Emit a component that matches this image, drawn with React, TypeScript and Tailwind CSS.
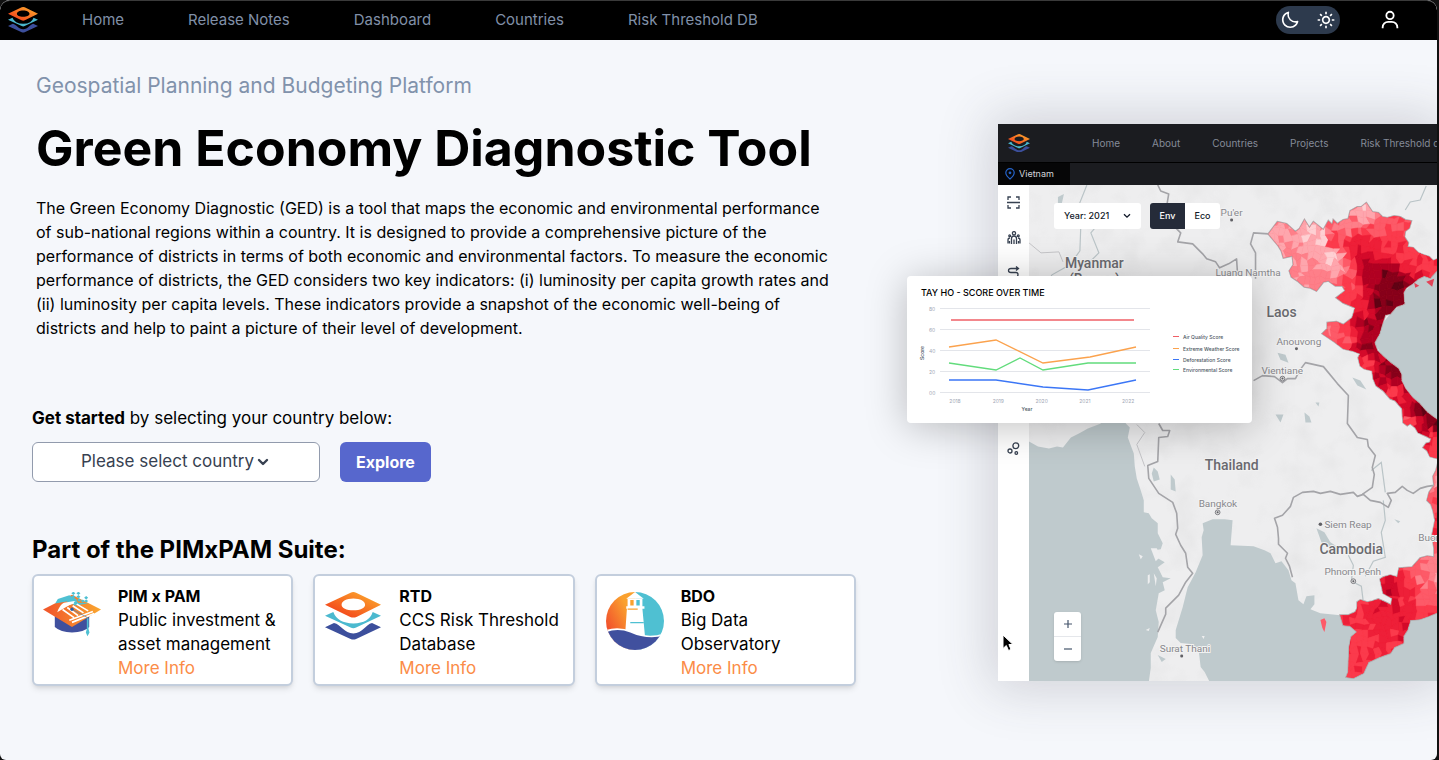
import { useId } from "react";
import { BiMoon, BiSun, BiUser } from "react-icons/bi";

const navLinks = ["Home", "Release Notes", "Dashboard", "Countries", "Risk Threshold DB"];
const previewLinks = ["Home", "About", "Countries", "Projects", "Risk Threshold db"];

function LayersLogo({ className }: { className?: string }) {
  const id = useId();
  return (
    <svg viewBox="0 0 162 138" className={className} aria-hidden="true">
      <defs>
        <linearGradient id={id} x1="0" y1="1" x2="1" y2="0">
          <stop offset="0.25" stopColor="#f4511e" />
          <stop offset="0.85" stopColor="#fba02b" />
        </linearGradient>
      </defs>
      <path d="M0 102 L26 90 C46 94 56 120 82 120 C108 120 118 94 136 90 L162 102 L90 136 Q82 139 74 136 Z" fill="#3c4f9c" />
      <path d="M0 69 L24 58 Q36 90 82 91 Q128 90 138 58 L162 69 L90 103 Q82 107 74 103 Z" fill="#4bb9cf" />
      <path
        fillRule="evenodd"
        fill={`url(#${id})`}
        d="M0 37 L74 2 Q82 -2 90 2 L162 37 L91 72 Q82 76 73 72 Z M82 19 C62 19 48 27 48 37 C48 47 62 53 82 53 C102 53 116 47 116 37 C116 27 102 19 82 19 Z"
      />
    </svg>
  );
}

function CapLogo() {
  return (
    <svg viewBox="0 0 172 132" className="w-[58px]" aria-hidden="true">
      <defs>
        <linearGradient id="cap" x1="0" x2="1">
          <stop offset="0.1" stopColor="#f15a2b" />
          <stop offset="1" stopColor="#faa72f" />
        </linearGradient>
      </defs>
      <path d="M35 70 V104 Q52 120 86 120 Q122 120 137 104 V70 Z" fill="#40509e" />
      <path d="M0 52 L86 8 L172 52 L86 104 Z" fill="url(#cap)" />
      <path d="M36 34 L44 21 L78 10 L96 20 L104 32 L136 33 L96 40 L70 28 Z" fill="#4fc0d2" />
      <path d="M42 60 Q50 38 62 32 L98 26 L90 32 Z" fill="#fff" />
      <g stroke="#fff" strokeWidth="5" fill="none">
        <path d="M60 42 L92 32 M58 52 L92 76 M72 46 L104 70 M88 41 L120 62 M100 36 L134 56 M78 84 L148 58 M86 90 L152 64" />
      </g>
      <g fill="#4fc0d2">
        {[[90, 4], [105, 4], [90, 14], [105, 14], [95, 24], [107, 24], [128, 17], [128, 27], [118, 27]].map(([x, y]) => (
          <path key={`${x}-${y}`} d={`M${x - 6} ${y} L${x} ${y - 5} L${x + 6} ${y} L${x} ${y + 5} Z`} />
        ))}
        <path d="M130 78 H135 V110 L138 120 L132 131 L127 120 L130 110 Z" />
      </g>
      <path d="M86 51 L132 76" stroke="#4a7fb5" strokeWidth="2" />
      <circle cx="86" cy="51" r="5" fill="#2c5fa8" />
    </svg>
  );
}

function LighthouseLogo() {
  return (
    <svg viewBox="0 0 172 172" className="w-[58px]" aria-hidden="true">
      <defs>
        <linearGradient id="beam" x1="0" y1="0.9" x2="0.9" y2="0">
          <stop offset="0.1" stopColor="#f0452c" />
          <stop offset="0.75" stopColor="#faa12e" />
        </linearGradient>
        <clipPath id="disc">
          <circle cx="86" cy="86" r="86" />
        </clipPath>
      </defs>
      <g clipPath="url(#disc)">
        <rect width="88" height="172" fill="url(#beam)" />
        <rect x="88" width="84" height="172" fill="#4fc0d2" />
        <path d="M86 0 L112 20 H60 Z" fill="#fff" />
        <path d="M64 20 H108 V42 H64 Z M60 42 H114 V50 H60 Z M62 50 H108 L116 136 H56 Z" fill="#fff" />
        <path d="M72 24 h10 v16 h-10 Z M64 49 H94 V53 H64 Z" fill="#faa12e" />
        <path d="M90 24 h10 v16 h-10 Z M72 89 H112 V93 H72 Z" fill="#4fc0d2" />
        <path d="M0 113 Q36 100 76 116 Q124 140 172 122 V172 H0 Z" fill="#fff" />
        <path d="M0 119 Q36 106 72 120 Q120 142 172 130 V172 H0 Z" fill="#40509e" />
      </g>
    </svg>
  );
}

const suite = [
  { name: "PIM x PAM", lines: ["Public investment &", "asset management"], logo: <CapLogo /> },
  { name: "RTD", lines: ["CCS Risk Threshold", "Database"], logo: <LayersLogo className="w-[56px]" /> },
  { name: "BDO", lines: ["Big Data", "Observatory"], logo: <LighthouseLogo /> },
];

/* Districts: a jittered mesh shaded by the nearest anchors of intensity. */
const shades = ["#fed0d3", "#fea6ad", "#fe7f89", "#fd5a68", "#fb3a4c", "#ee1f38", "#d40a2a", "#b00022", "#87001a", "#600214"];
const anchors = [
  [1275, 232, 1.3], [1290, 250, 2], [1305, 228, 0.6], [1318, 236, 0], [1327, 252, 0], [1335, 265, 1],
  [1300, 272, 1.6], [1318, 280, 2], [1338, 222, 2.2], [1362, 208, 0.8], [1380, 222, 3.2], [1400, 228, 3.6],
  [1330, 236, 4.5], [1352, 240, 5.6], [1362, 256, 6.3], [1378, 246, 4.6], [1400, 252, 4.3], [1425, 262, 4.4],
  [1345, 275, 3], [1350, 292, 4], [1366, 274, 7], [1385, 272, 8.4], [1393, 284, 8.6], [1376, 296, 8.3],
  [1360, 304, 5], [1385, 310, 8.4], [1366, 322, 7.4], [1330, 328, 2.6], [1342, 332, 3.7], [1368, 345, 7.8],
  [1365, 360, 4.3], [1386, 368, 7.8], [1376, 376, 6.3], [1390, 388, 4.2], [1398, 376, 7.6], [1405, 400, 6.2],
  [1418, 408, 8.6], [1432, 420, 9], [1408, 418, 3.6], [1420, 428, 6.4], [1432, 434, 4.4], [1430, 450, 4.2],
  [1436, 475, 1], [1432, 498, 3], [1436, 525, 5], [1434, 560, 2], [1437, 575, 1], [1418, 575, 3],
  [1424, 595, 2.8], [1432, 608, 4], [1388, 585, 6.4], [1402, 592, 4.6], [1395, 612, 5.7], [1406, 608, 5.5],
  [1375, 615, 5], [1355, 620, 4.7], [1365, 640, 4.2], [1385, 635, 4.7], [1355, 665, 4], [1400, 632, 5],
];

function noise(a: number, b: number) {
  const v = Math.sin(a * 127.1 + b * 311.7) * 43758.5453;
  return v - Math.floor(v);
}

function meshPoint(i: number, j: number, size: number) {
  return [
    1264 + (i + noise(i, j) * 0.8) * size,
    196 + (j + noise(j + 50, i) * 0.8) * size,
  ].map(Math.round);
}

function districts() {
  const size = 6;
  const cells = [];
  for (let i = -1; i < 30; i++) {
    for (let j = -1; j < 82; j++) {
      const [x, y] = meshPoint(i, j, size);
      let sum = 0;
      let weight = 0;
      for (const [ax, ay, value] of anchors) {
        const w = 1 / (((x - ax) ** 2 + (y - ay) ** 2) ** 1.5 + 20);
        sum += value * w;
        weight += w;
      }
      const level = Math.max(0, Math.min(9, Math.round(sum / weight + (noise(i + 9, j + 4) - 0.5) * 1.1)));
      const points = [[i, j], [i + 1, j], [i + 1, j + 1], [i, j + 1]].map(([a, b]) => meshPoint(a, b, size).join(",")).join(" ");
      cells.push(<polygon key={`${i}:${j}`} points={points} fill={shades[level]} stroke={shades[level]} strokeWidth="0.6" />);
    }
  }
  return cells;
}

const north =
  "M1268 233 L1277 221 L1286 223 L1295 231 L1299 228 L1304 219 L1309 227 L1313 221 L1323 229 L1328 220 L1332 224 L1333 219 L1337 223 L1343 219 L1348 218 L1350 210 L1357 206 L1361 206 L1366 202 L1372 211 L1378 212 L1382 216 L1387 217 L1394 215 L1400 216 L1405 219 L1411 220 L1409 227 L1405 230 L1404 236 L1408 242 L1407 246 L1413 247 L1418 252 L1423 254 L1429 256 L1433 260 L1438 258 V268 L1430 277 L1424 275 L1418 278 L1412 283 L1406 287 L1403 292 L1404 303 L1396 306 L1390 313 L1385 314 L1382 323 L1379 333 L1374 342 L1377 350 L1382 355 L1390 362 L1398 368 L1401 374 L1401 380 L1405 388 L1412 397 L1419 403 L1427 412 L1438 420 V458 L1430 456 L1427 450 L1423 447 L1426 443 L1430 442 L1431 438 L1427 436 L1418 432 L1415 427 L1410 423 L1407 425 L1403 422 L1402 408 L1395 400 L1390 398 L1383 390 L1376 385 L1373 378 L1372 370 L1364 368 L1360 365 L1358 357 L1360 353 L1352 350 L1343 348 L1334 341 L1322 333 L1327 328 L1327 322 L1336 321 L1343 324 L1352 317 L1355 307 L1343 302 L1336 297 L1345 290 L1342 285 L1335 285 L1328 280 L1323 281 L1316 290 L1310 287 L1304 286 L1297 280 L1291 276 L1289 270 L1293 264 L1292 255 L1283 257 L1281 250 L1278 245 Z";
const south =
  "M1438 462 L1436 470 L1433 476 L1434 485 L1429 492 L1427 500 L1431 504 L1433 510 L1435 520 L1432 535 L1434 548 L1434 557 L1427 556 L1420 558 L1412 567 L1399 568 L1397 577 L1390 575 L1383 577 L1380 579 L1383 593 L1392 598 L1391 605 L1385 602 L1378 599 L1372 601 L1367 602 L1360 600 L1357 602 L1357 608 L1355 612 L1348 615 L1340 615 L1343 625 L1350 626 L1357 632 L1351 637 L1349 647 L1348 672 L1346 677 L1353 678 L1363 673 L1368 662 L1379 657 L1390 653 L1394 647 L1403 643 L1403 636 L1407 630 L1410 620 L1420 619 L1428 616 L1438 612 Z";

const minorPlaces: [string, number, number][] = [
  ["Pu'er", 1220, 215], ["Luang Namtha", 1215, 275], ["Anouvong", 1276, 344], ["Vientiane", 1261, 373],
  ["Bangkok", 1198, 507], ["Siem Reap", 1324, 528], ["Phnom Penh", 1324, 575], ["Surat Thani", 1159, 652], ["Buon", 1418, 541],
];

function MapView() {
  return (
    <svg viewBox="1028 184 410 497" preserveAspectRatio="xMinYMin slice" className="h-full w-full" role="img" aria-label="Map of Southeast Asia">
      <defs>
        <clipPath id="vietnam-area">
          <path d={north} />
          <path d={south} />
        </clipPath>
        <filter id="relief" x="0" y="0" width="1" height="1">
          <feTurbulence type="fractalNoise" baseFrequency="0.035" numOctaves="3" seed="4" />
          <feColorMatrix values="0 0 0 0 0.5  0 0 0 0 0.5  0 0 0 0 0.5  0.9 0 0 0 -0.42" />
        </filter>
      </defs>
      <rect x="1028" y="184" width="410" height="497" fill="#eeeeef" />
      <rect x="1028" y="184" width="410" height="497" filter="url(#relief)" opacity="0.35" />
      <g fill="#bfcacd">
        <path d="M1028 441 L1037 446 L1048 448 L1056 446 L1062 447 L1070 437 L1078 433 L1087 428 L1100 423 V410 H1124 L1125 423 L1129 427 L1127 437 L1133 453 L1134 466 L1136 478 L1140 490 L1143 500 L1143 512 L1148 513 L1151 518 L1157 523 L1157 533 L1162 543 L1160 549 L1154 550 L1157 558 L1164 562 L1157 567 L1162 577 L1170 578 L1162 582 L1164 590 L1158 593 L1155 610 L1158 622 L1157 637 L1150 653 L1150 668 L1148 682 H1028 Z" />
        <path d="M1209 682 L1204 672 L1200 667 L1198 650 L1190 644 L1180 643 L1175 638 L1175 630 L1182 607 L1187 587 L1195 572 L1202 555 L1201 537 L1203 530 L1202 523 L1212 519 L1224 519 L1232 520 L1230 545 L1253 546 L1264 550 L1270 553 L1275 563 L1281 561 L1288 570 L1291 580 L1295 583 L1298 600 L1303 604 L1306 596 L1314 595 L1314 604 L1310 609 L1320 613 L1340 615 L1353 614 L1362 635 L1410 620 L1420 619 L1438 612 V682 Z" />
        <path d="M1438 262 L1418 278 L1403 292 L1403 302 L1390 313 L1382 323 L1374 342 L1382 355 L1398 368 L1401 380 L1412 397 L1427 412 L1438 422 Z" />
        <path d="M1153 467 l4 4 l2 8 l-6 2 l-2 -8 Z M1170 474 l4 5 l1 12 l-5 -2 Z M1277 352 l8 2 l3 8 l-8 -3 Z M1352 377 l8 3 l6 9 l-9 -4 Z M1316 528 l8 4 l6 10 l6 4 l-3 4 l-12 -8 Z M1057 196 l6 -3 l-2 9 l-4 0 Z M1275 414 h8 l-3 8 Z M1304 412 l5 4 l2 6 l-6 0 Z M1157 655 l8 4 l-4 3 Z M1315 402 l4 0 l-1 4 Z M1394 519 l6 2 l-2 2 Z" />
      </g>
      <g fill="#eeeeef">
        <path d="M1150 548 l6 0 l4 8 l-5 5 Z M1147 575 l2 -1 l0 8 l-2 2 Z M1153 573 l3 5 l-1 8 Z M1138 554 l4 2 l-2 3 Z M1145 630 l4 -2 l-1 3 Z M1201 636 l3 0 l-1 3 Z" />
      </g>
      <g stroke="#bac4c7" fill="none" strokeWidth="1.2">
        <path d="M1086 184 l-8 20 l2 18 l-1 28 l-10 14 l-18 10 l-8 14 M1100 220 l-10 12 l8 20 l-14 14 M1383 500 l2 20 l-4 12 l4 25 l-12 4 l-8 15 M1348 555 l5 10 l-2 16 l10 5 l2 16 M1371 470 l10 -8 l4 30 M1426 185 l-6 14 l-10 2 l-5 8" />
      </g>
      <g stroke="#a4a4a8" fill="none" strokeWidth="1.6" strokeLinejoin="round">
        <path d="M1157 184 l3 6 l8 3 l-2 12 l8 9 l-4 8 l10 10 l-3 9 l15 2 l10 10 l4 5 l9 3 l4 6 l9 -4 l8 -5 l1 16" />
        <path d="M1255 278 V252 L1250 243 L1253 232 L1268 233" />
        <path d="M1253 380 L1262 375 L1274 376 L1282 382 L1287 378 L1295 378 L1299 370 L1305 362 L1323 366 L1328 372 L1337 383 L1348 395 L1347 423 L1357 437 L1367 439 L1368 446 L1375 455 L1372 467 L1374 474 L1372 487 L1362 494" />
        <path d="M1292 577 L1289 566 L1285 558 L1287 553 L1278 544 L1278 538 L1277 527 L1274 518 L1282 515 L1290 506 L1293 497 L1302 492 L1313 491 L1320 493 L1330 491 L1340 494 L1353 492 L1357 496 L1363 494 L1370 500 L1380 502 L1388 507 L1391 500 L1387 493 L1395 492 L1402 486 L1407 490 L1413 493 L1420 488 L1427 486 L1434 485" />
        <path d="M1158 423 L1162 430 L1169 430 L1167 436 L1158 437 L1157 461 L1147 465 L1148 478 L1158 493 L1172 502 L1176 513 L1177 528 L1175 534 L1180 545 L1185 553 L1187 567 L1192 573 L1185 582 L1178 595 L1165 608 L1165 614 L1157 632" />
      </g>
      <path d="M1028 242 l12 10 l18 -1 l4 10 M1136 424 l8 8 l-8 12 l8 22" stroke="#c5c5c8" fill="none" />
      <g stroke="#b3a5a8" strokeWidth="2" fill="none">
        <path d={north} />
        <path d={south} />
      </g>
      <g clipPath="url(#vietnam-area)">
        <rect x="1264" y="196" width="180" height="486" fill="#fb3a4c" />
        {districts()}
      </g>
      <path d="M1320 620 l4 -2 l2 4 l-2 10 l-2 -4 Z" fill="#fd5a68" />
      <path d="M1414 282 l5 3 l-4 2 Z M1426 281 l8 -3 l-2 8 Z" fill="#e34256" />
      <g className="font-['Roboto',sans-serif] font-medium" fill="#6a6a6f" stroke="#f2f2f2" strokeWidth="2" paintOrder="stroke">
        <g fontSize="14">
          <text x="1064" y="267">Myanmar</text>
          <text x="1068" y="283">(Burma)</text>
          <text x="1266" y="316">Laos</text>
          <text x="1204" y="470">Thailand</text>
          <text x="1319" y="554">Cambodia</text>
        </g>
        <g fontSize="10" fill="#88888d" className="font-normal">
          {minorPlaces.map(([name, x, y]) => (
            <text key={name} x={x} y={y}>{name}</text>
          ))}
        </g>
      </g>
      <g fill="#606065">
        <circle cx="1231" cy="219" r="1.5" />
        <circle cx="1296" cy="348" r="1.5" />
        <circle cx="1320" cy="524" r="1.8" />
        <circle cx="1181" cy="656" r="1.5" />
      </g>
      {[[1282, 378], [1217, 512], [1353, 581]].map(([x, y]) => (
        <g key={x}>
          <circle cx={x} cy={y} r="2.4" fill="#ddd" stroke="#808085" />
          <circle cx={x} cy={y} r="1" fill="#606065" />
        </g>
      ))}
    </svg>
  );
}

const series = [
  { label: "Air Quality Score", color: "#ef5f66", points: "44,44 227,44", legendY: 61 },
  { label: "Extreme Weather Score", color: "#fba24d", points: "42,71 89,64 136,87 183,81 229,71", legendY: 73 },
  { label: "Deforestation Score", color: "#3b76f6", points: "42,104 89,104 136,111 181,114 229,104", legendY: 84 },
  { label: "Environmental Score", color: "#62dc7c", points: "42,87 89,94 113,82 136,94 181,87 229,87", legendY: 94 },
];

function ScoreCard() {
  return (
    <section className="absolute top-[236px] left-[51px] h-[147px] w-[345px] rounded bg-white shadow-[0_4px_40px_rgba(0,0,0,0.25)]">
      <h2 className="absolute top-3 left-[14px] text-[9px] leading-[10px] font-medium whitespace-nowrap text-black">TAY HO - SCORE OVER TIME</h2>
      <svg viewBox="0 0 345 147" className="h-full w-full" role="img" aria-label="Scores from 2018 to 2022">
        {["80", "60", "40", "20", "00"].map((tick, i) => (
          <g key={tick}>
            <path d={`M33 ${32.5 + i * 21} H243`} stroke="#e3e5ea" />
            <text x="22" y={34.5 + i * 21} fontSize="5" fill="#a0a6b4">{tick}</text>
          </g>
        ))}
        {["2018", "2019", "2020", "2021", "2022"].map((year, i) => (
          <text key={year} x={48 + i * 43.3} y="127" fontSize="5" textAnchor="middle" fill="#a0a6b4">{year}</text>
        ))}
        <text x="120" y="135" fontSize="5" fontWeight="500" textAnchor="middle" fill="#4b5563">Year</text>
        <text transform="translate(17 77) rotate(-90)" fontSize="5" fontWeight="500" textAnchor="middle" fill="#4b5563">Score</text>
        {series.map((s) => (
          <g key={s.label}>
            <polyline points={s.points} fill="none" stroke={s.color} strokeWidth="1.3" />
            <path d={`M266 ${s.legendY - 0.5} h6`} stroke={s.color} />
            <text x="276" y={s.legendY + 1.5} fontSize="5" fontWeight="500" fill="#4b5563">{s.label}</text>
          </g>
        ))}
      </svg>
    </section>
  );
}

const iconProps = { fill: "none", stroke: "#374151", strokeWidth: 1.3 };

function Preview() {
  return (
    <div className="h-[557px] bg-white shadow-[0_0_50px_8px_rgba(60,60,75,0.2)]">
      <div className="flex h-full flex-col overflow-hidden">
        <div className="flex h-[38px] shrink-0 items-center bg-[#1b1c20] pl-[10px]">
          <LayersLogo className="w-[22px] shrink-0" />
          <nav className="ml-[62px] flex gap-8 text-[10px] whitespace-nowrap text-[#858b98]">
            {previewLinks.map((link) => (
              <a key={link} href="#">{link}</a>
            ))}
          </nav>
        </div>
        <div className="flex h-[23px] shrink-0 border-t border-black bg-[#1b1c20]">
          <div className="flex w-[72px] items-center gap-1 bg-[#060607] pl-[7px] text-[9px] text-gray-300">
            <svg viewBox="0 0 10 12" className="h-3 w-[10px]" fill="none" stroke="#2563c9" strokeWidth="1.2">
              <path d="M5 11 C2 8.5 0.8 7 0.8 4.8 A4.2 4.2 0 0 1 9.2 4.8 C9.2 7 8 8.5 5 11 Z" />
              <circle cx="5" cy="4.8" r="0.8" fill="#2563c9" />
            </svg>
            Vietnam
          </div>
        </div>
        <div className="flex min-h-0 flex-1">
          <div className="flex w-[31px] shrink-0 flex-col items-center gap-[22px] pt-[11px]">
            <svg viewBox="0 0 13 13" className="size-[13px]" {...iconProps}>
              <path d="M1 4 V1 H4 M9 1 H12 V4 M12 9 V12 H9 M4 12 H1 V9 M0 6.5 H13" />
            </svg>
            <svg viewBox="0 0 14 13" className="h-[13px] w-[14px]" {...iconProps}>
              <circle cx="7" cy="2.2" r="1.6" />
              <path d="M4.5 13 V7.5 Q4.5 5 7 5 Q9.5 5 9.5 7.5 V13 M7 8.5 V13 M1 12.5 V9 Q1 7 3 7 M13 12.5 V9 Q13 7 11 7 M2.5 12.5 V10 M11.5 12.5 V10" />
              <circle cx="2.7" cy="4.8" r="0.9" />
              <circle cx="11.3" cy="4.8" r="0.9" />
            </svg>
            <svg viewBox="0 0 13 13" className="size-[13px]" {...iconProps}>
              <path d="M11 2.5 H4 Q1.500 2.500 1.500 4.500 Q1.500 6.500 4 6.500 H9 Q11 6.500 11 8.500 Q11 11 9 11 H2 M9 0.500 L11.500 2.500 L9 4.500" />
            </svg>
            <svg viewBox="0 0 13 13" className="mt-[141px] size-[13px]" {...iconProps}>
              <circle cx="8.800" cy="3.700" r="2.900" />
              <circle cx="3" cy="9" r="2" />
              <circle cx="9.300" cy="11" r="1.300" />
            </svg>
          </div>
          <div className="relative min-w-0 flex-1">
            <MapView />
            <div className="absolute top-[18px] left-[25px] flex gap-[9px] text-[9px] font-medium text-gray-900">
              <button className="flex h-[26px] w-[87px] items-center justify-between rounded-[3px] bg-white px-[10px]">
                Year: 2021
                <svg viewBox="0 0 8 6" className="w-2" fill="none" stroke="currentColor" strokeWidth="1.3">
                  <path d="M1 1.200 L4 4.200 L7 1.200" />
                </svg>
              </button>
              <div className="flex h-[26px] overflow-hidden rounded-[3px] bg-white">
                <button className="w-[35px] bg-[#252b39] text-white">Env</button>
                <button className="w-[35px]">Eco</button>
              </div>
            </div>
            <div className="absolute bottom-5 left-[25px] flex h-[49px] w-[27px] flex-col divide-y divide-gray-200 rounded-[3px] bg-white text-slate-600 shadow-sm">
              {["M4 0 V8 M0 4 H8", "M0 4 H8"].map((d, i) => (
                <button key={d} aria-label={i === 0 ? "Zoom in" : "Zoom out"} className="flex flex-1 items-center justify-center">
                  <svg viewBox="0 0 8 8" className="size-2" stroke="currentColor" strokeWidth="1.2">
                    <path d={d} />
                  </svg>
                </button>
              ))}
            </div>
          </div>
        </div>
      </div>
    </div>
  );
}

export default function App() {
  return (
    <div className="min-h-screen bg-[#111111] pr-[2px] font-['Inter',sans-serif]">
      <div className="flex min-h-screen flex-col overflow-hidden rounded-t-[10px] rounded-b-md bg-[#f5f7fb]">
        <header className="flex h-10 items-center rounded-t-[10px] border-t border-[#3a3a3a] bg-black pr-9 pb-px pl-2">
          <LayersLogo className="w-[30px] shrink-0" />
          <nav className="ml-11 flex gap-16 text-[15px] whitespace-nowrap text-[#8090a8]">
            {navLinks.map((link) => (
              <a key={link} href="#">{link}</a>
            ))}
          </nav>
          <button aria-label="Toggle theme" className="ml-auto flex h-7 w-16 items-center justify-between rounded-full bg-[#2d3a4d] px-1 text-white">
            <BiMoon size={20} />
            <BiSun size={20} />
          </button>
          <button aria-label="Account" className="ml-[39px] text-white">
            <BiUser size={22} />
          </button>
        </header>

        <main className="flex flex-1">
          <div className="w-[856px] shrink-0 pt-8 pl-8 text-black">
            <div className="pl-1">
              <p className="text-[21px] leading-7 text-[#8192ab]">Geospatial Planning and Budgeting Platform</p>
              <h1 className="mt-6 text-[50px] leading-[48px] font-bold whitespace-nowrap">Green Economy Diagnostic Tool</h1>
              <p className="mt-6 max-w-[800px] text-base leading-6">
                The Green Economy Diagnostic (GED) is a tool that maps the economic and environmental performance of sub-national
                regions within a country. It is designed to provide a comprehensive picture of the performance of districts in
                terms of both economic and environmental factors. To measure the economic performance of districts, the GED
                considers two key indicators: (i) luminosity per capita growth rates and (ii) luminosity per capita levels. These
                indicators provide a snapshot of the economic well-being of districts and help to paint a picture of their level
                of development.
              </p>
            </div>
            <label htmlFor="country" className="mt-[66px] block text-[17px] leading-6">
              <strong className="font-bold">Get started</strong> by selecting your country below:
            </label>
            <div className="mt-3 flex gap-5">
              <div className="relative w-72">
                <select id="country" className="h-10 w-full appearance-none rounded-md border border-[#929bad] bg-white pl-12 text-[17px] text-[#374151]">
                  <option>Please select country</option>
                </select>
                <svg viewBox="0 0 12 8" className="pointer-events-none absolute top-4 left-[225px] w-3" fill="none" stroke="#374151" strokeWidth="2.400" strokeLinecap="round" strokeLinejoin="round">
                  <path d="M2 2 L6 6 L10 2" />
                </svg>
              </div>
              <button className="h-10 rounded-md bg-[#5767cd] px-4 font-bold text-white">Explore</button>
            </div>
            <h2 className="mt-[52px] text-2xl leading-8 font-bold">Part of the PIMxPAM Suite:</h2>
            <div className="mt-2 grid grid-cols-3 gap-5">
              {suite.map((item) => (
                <article key={item.name} className="flex gap-4 rounded-md border-2 border-[#c3cedd] bg-white pt-2 pb-1 pl-2 shadow-md">
                  <div className="flex w-[60px] shrink-0 items-start justify-center pt-2">{item.logo}</div>
                  <div className="text-[17px] leading-6 whitespace-nowrap">
                    <h3 className="text-base leading-6 font-bold">{item.name}</h3>
                    {item.lines.map((line) => (
                      <p key={line}>{line}</p>
                    ))}
                    <a href="#" className="block text-[#fb8c47]">More Info</a>
                  </div>
                </article>
              ))}
            </div>
          </div>
          <div className="relative min-w-0 flex-1 pt-[84px] pl-[142px]">
            <Preview />
            <ScoreCard />
            <svg viewBox="0 0 12 18" className="absolute top-[594px] left-[146px] w-3" aria-hidden="true">
              <path d="M1 1 V14.500 L4.300 11.500 L6.500 16.500 L9 15.400 L6.900 10.500 H11 Z" fill="#000" stroke="#fff" />
            </svg>
          </div>
        </main>
      </div>
    </div>
  );
}
